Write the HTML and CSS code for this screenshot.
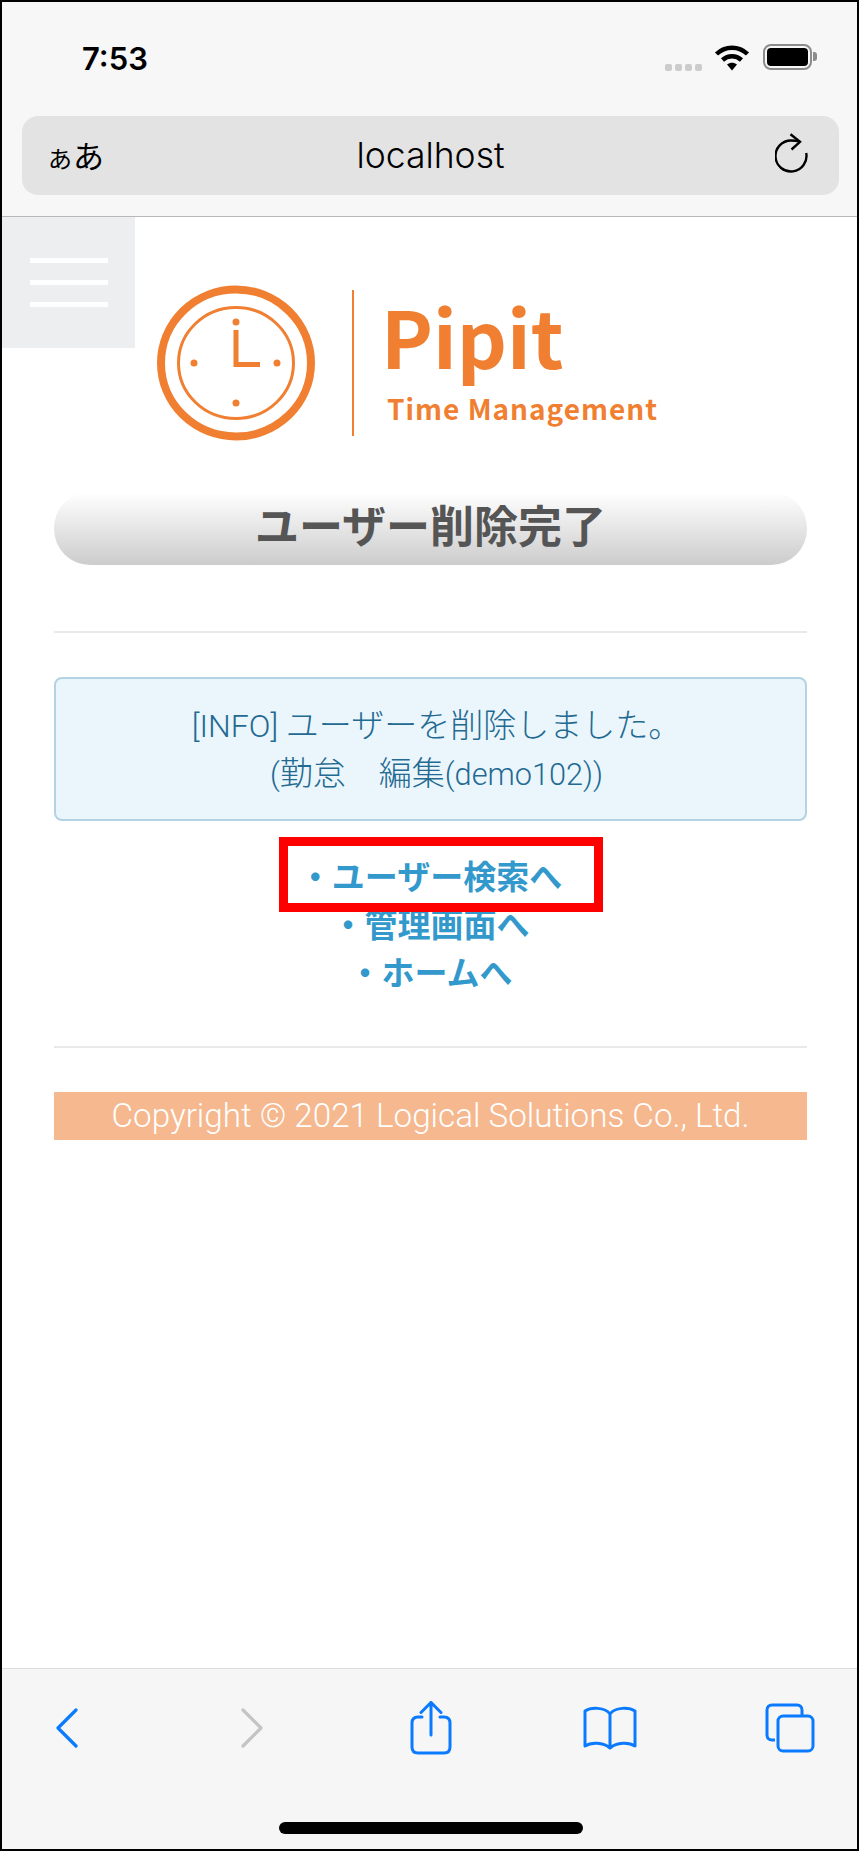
FILE: index.html
```html
<!DOCTYPE html>
<html lang="ja">

<head>
    <meta charset="UTF-8">
    <title>ユーザー削除完了</title>
    <link rel="stylesheet" href="styles.css">
</head>

<body>
    <div class="phone">
        <header class="browser-top">
            <div class="status-bar">
                <span class="time">7:53</span>
                <div class="status-icons">
                    <div class="signal"><i></i><i></i><i></i><i></i></div>
                    <svg class="wifi" width="36" height="27" viewBox="0 0 36 27">
                        <path d="M2.500 10C11 1.500 25 1.500 33.500 10" fill="none" stroke="#000" stroke-width="4.500"/>
                        <path d="M8.500 16C14 11 22 11 27.500 16" fill="none" stroke="#000" stroke-width="4.500"/>
                        <path d="M13 20.500L18 26.500L23 20.500C20 18 16 18 13 20.500Z" fill="#000"/>
                    </svg>
                    <div class="battery"><div class="battery-fill"></div></div>
                    <div class="battery-nub"></div>
                </div>
            </div>
            <div class="address-bar">
                <span class="aa"><small>あ</small>あ</span>
                <span class="url">localhost</span>
                <svg class="reload" width="34" height="40" viewBox="0 0 34 40">
                    <path d="M25 8.500C22 7.800 19 7.500 16 7.500A15.500 15.500 0 1 0 31.200 20" fill="none" stroke="#000" stroke-width="2.400"/>
                    <path d="M15.500 1.200L25 8.800L16.500 16.500" fill="none" stroke="#000" stroke-width="2.400"/>
                </svg>
            </div>
        </header>

        <main class="page">
            <button class="menu-btn"><span></span><span></span><span></span></button>

            <div class="logo">
                <svg class="logo-clock" width="160" height="156" viewBox="0 0 160 156">
                    <ellipse cx="80" cy="78" rx="75" ry="73.500" fill="none" stroke="#f07f31" stroke-width="8"/>
                    <ellipse cx="80" cy="78" rx="57.500" ry="55.500" fill="none" stroke="#f07f31" stroke-width="3"/>
                    <circle cx="80" cy="37" r="3.500" fill="#f07f31"/>
                    <circle cx="38" cy="78" r="3.500" fill="#f07f31"/>
                    <circle cx="121" cy="78" r="3.500" fill="#f07f31"/>
                    <circle cx="80" cy="118" r="3.500" fill="#f07f31"/>
                    <path d="M80 45V79.500H104" fill="none" stroke="#f07f31" stroke-width="5"/>
                </svg>
                <div class="logo-line"></div>
                <div class="logo-text">
                    <div class="logo-name">Pipit</div>
                    <div class="logo-sub">Time Management</div>
                </div>
            </div>

            <h1 class="page-title">ユーザー削除完了</h1>
            <hr class="rule rule-top">

            <div class="info-box">
                <p><span class="latin">[INFO] </span>ユーザーを削除しました。</p>
                <p><span class="latin">(</span>勤怠　編集<span class="latin">(demo102))</span></p>
            </div>

            <div class="links">
                <a href="#">・ユーザー検索へ</a>
                <a href="#">・管理画面へ</a>
                <a href="#">・ホームへ</a>
                <div class="highlight"></div>
            </div>

            <hr class="rule rule-bottom">
            <footer class="copyright">Copyright © 2021 Logical Solutions Co., Ltd.</footer>
        </main>

        <nav class="browser-bottom">
            <div class="tool-row">
                <svg width="22" height="40" viewBox="0 0 22 40">
                    <path d="M20 2L2 20L20 38" fill="none" stroke="#0a7aff" stroke-width="3.200" stroke-linecap="round" stroke-linejoin="round"/>
                </svg>
                <svg width="22" height="40" viewBox="0 0 22 40">
                    <path d="M2 2L20 20L2 38" fill="none" stroke="#c4c4c4" stroke-width="3.200" stroke-linecap="round" stroke-linejoin="round"/>
                </svg>
                <svg width="42" height="54" viewBox="0 0 42 54">
                    <path d="M12 16H8C4 16 2 18 2 22V46C2 50 4 52 8 52H34C38 52 40 50 40 46V22C40 18 38 16 34 16H30" fill="none" stroke="#0a7aff" stroke-width="3" stroke-linecap="round"/>
                    <path d="M21 34V2M11 11.500L21 1.500L31 11.500" fill="none" stroke="#0a7aff" stroke-width="3" stroke-linecap="round"/>
                </svg>
                <svg width="54" height="44" viewBox="0 0 54 44">
                    <path d="M27 8C22 1 8 1 2 5V40C8 36 20 36 27 42C34 36 46 36 52 40V5C46 1 32 1 27 8ZM27 8V42" fill="none" stroke="#0a7aff" stroke-width="3" stroke-linejoin="round"/>
                </svg>
                <svg width="50" height="50" viewBox="0 0 50 50">
                    <path d="M10 37H7C4 37 2 35 2 32V7C2 4 4 2 7 2H32C35 2 37 4 37 7V12" fill="none" stroke="#0a7aff" stroke-width="3"/>
                    <rect x="13" y="13" width="35" height="35" rx="5" fill="none" stroke="#0a7aff" stroke-width="3"/>
                </svg>
            </div>
            <div class="home-bar"></div>
        </nav>
    </div>
</body>

</html>
```
FILE: styles.css
```css
* {
    margin: 0;
    padding: 0;
    box-sizing: border-box;
}

body {
    width: 860px;
    height: 1852px;
    background: #fff;
    font-family: "Liberation Sans", "Noto Sans CJK JP", sans-serif;
}

.phone {
    width: 859px;
    height: 1851px;
    border: 2.500px solid #000;
    display: flex;
    flex-direction: column;
}

/* browser chrome */
.browser-top {
    height: 215px;
    background-color: #f7f7f7;
    border-bottom: 1px solid #b8b8b8;
    padding: 0 18px 0 20px;
}

.status-bar {
    height: 114px;
    display: flex;
    justify-content: space-between;
    padding: 42px 0 0 60px;
}

.time {
    font-family: Inter, "Liberation Sans", sans-serif;
    font-size: 31px;
    font-weight: 600;
    line-height: 30px;
    color: #000;
}

.status-icons {
    display: flex;
    align-items: flex-start;
    padding-right: 22px;
}

.signal {
    display: flex;
    gap: 3px;
    margin: 20px 12px 0 0;
}

.signal i {
    width: 7px;
    height: 7px;
    border-radius: 2px;
    background-color: #ccc;
}

.battery {
    width: 49px;
    height: 26px;
    border: 2px solid #8c8c8c;
    border-radius: 8px;
    padding: 2px;
    margin-left: 13px;
}

.battery-fill {
    height: 100%;
    background-color: #000;
    border-radius: 4px;
}

.battery-nub {
    width: 4px;
    height: 9px;
    background-color: #8c8c8c;
    border-radius: 0 3px 3px 0;
    margin: 8px 0 0 1px;
}

.address-bar {
    height: 79px;
    background-color: #e3e3e3;
    border-radius: 16px;
    display: flex;
    align-items: center;
    justify-content: space-between;
    padding: 0 30px 0 26px;
    position: relative;
}

.aa {
    font-size: 31px;
    color: #000;
    margin-bottom: 2px;
}

.aa small {
    font-size: 24px;
    margin-right: 1px;
}

.url {
    position: absolute;
    left: 0;
    right: 0;
    text-align: center;
    font-family: Inter, "Liberation Sans", sans-serif;
    font-size: 35.500px;
    font-weight: 300;
    color: #000;
    pointer-events: none;
}

.reload {
    margin-bottom: 5px;
}

/* page */
.page {
    flex: 1;
    padding: 0 50px 0 52px;
    position: relative;
    background: #fff;
}

.menu-btn {
    position: absolute;
    left: 0;
    top: 0;
    width: 133px;
    height: 131px;
    background-color: #eceef0;
    border: none;
    display: flex;
    flex-direction: column;
    align-items: center;
    justify-content: center;
    gap: 17px;
}

.menu-btn span {
    width: 78px;
    height: 5px;
    background-color: #fff;
}

.logo {
    display: flex;
    align-items: center;
    height: 156px;
    margin: 68px 0 0 102px;
}

.logo-line {
    width: 2.500px;
    height: 146px;
    background-color: #f07f31;
    margin-left: 35.500px;
}

.logo-text {
    margin: 0 0 7px 27px;
    color: #f07f31;
    font-family: "Noto Sans CJK JP", sans-serif;
}

.logo-name {
    font-size: 78px;
    font-weight: 700;
    line-height: 84px;
}

.logo-sub {
    font-size: 28px;
    font-weight: 700;
    line-height: 36px;
    letter-spacing: 1px;
    margin-top: 13px;
    margin-left: 6px;
}

.page-title {
    height: 73px;
    margin-top: 51px;
    border-radius: 36px;
    background: linear-gradient(to bottom, #fff, #ccc);
    text-align: center;
    font-size: 44px;
    font-weight: 700;
    line-height: 72px;
    color: #555;
}

.rule {
    border: none;
    height: 2px;
    background-color: #e9e9e9;
}

.rule-top {
    margin-top: 66px;
}

.info-box {
    height: 144px;
    margin-top: 44px;
    border: 2px solid #b3d2e2;
    border-radius: 8px;
    background-color: #ebf6fc;
    color: #236a92;
    font-family: "Noto Sans CJK JP", sans-serif;
    font-size: 33px;
    font-weight: 300;
    line-height: 48px;
    text-align: center;
    padding: 20px 0 0 12px;
}

.latin {
    font-family: Roboto, sans-serif;
    font-size: 32px;
    line-height: 1;
}

.info-box p + p .latin {
    font-size: 30.700px;
}

.links {
    margin-top: 33px;
    position: relative;
    display: flex;
    flex-direction: column;
    align-items: center;
}

.links a {
    font-size: 33px;
    font-weight: 700;
    line-height: 48px;
    color: #39c;
    text-decoration: none;
}

.highlight {
    position: absolute;
    left: 225px;
    top: -17px;
    width: 324px;
    height: 75px;
    border: 9px solid #f00;
}

.rule-bottom {
    margin-top: 48px;
}

.copyright {
    height: 48px;
    margin-top: 44px;
    background-color: #f5b88f;
    color: #fff;
    font-family: Roboto, sans-serif;
    font-size: 33.200px;
    font-weight: 300;
    line-height: 48px;
    text-align: center;
}

.browser-bottom {
    height: 181px;
    background-color: #f6f6f6;
    border-top: 1px solid #ddd;
    position: relative;
}

.tool-row {
    display: flex;
    align-items: center;
    padding: 32px 0 0 54px;
}

.tool-row svg:nth-child(2) {
    margin-left: 163px;
}

.tool-row svg:nth-child(3) {
    margin-left: 147px;
}

.tool-row svg:nth-child(4) {
    margin-left: 131px;
}

.tool-row svg:nth-child(5) {
    margin-left: 128px;
}

.home-bar {
    position: absolute;
    left: 277px;
    bottom: 15px;
    width: 304px;
    height: 12px;
    border-radius: 6px;
    background-color: #000;
}
```
